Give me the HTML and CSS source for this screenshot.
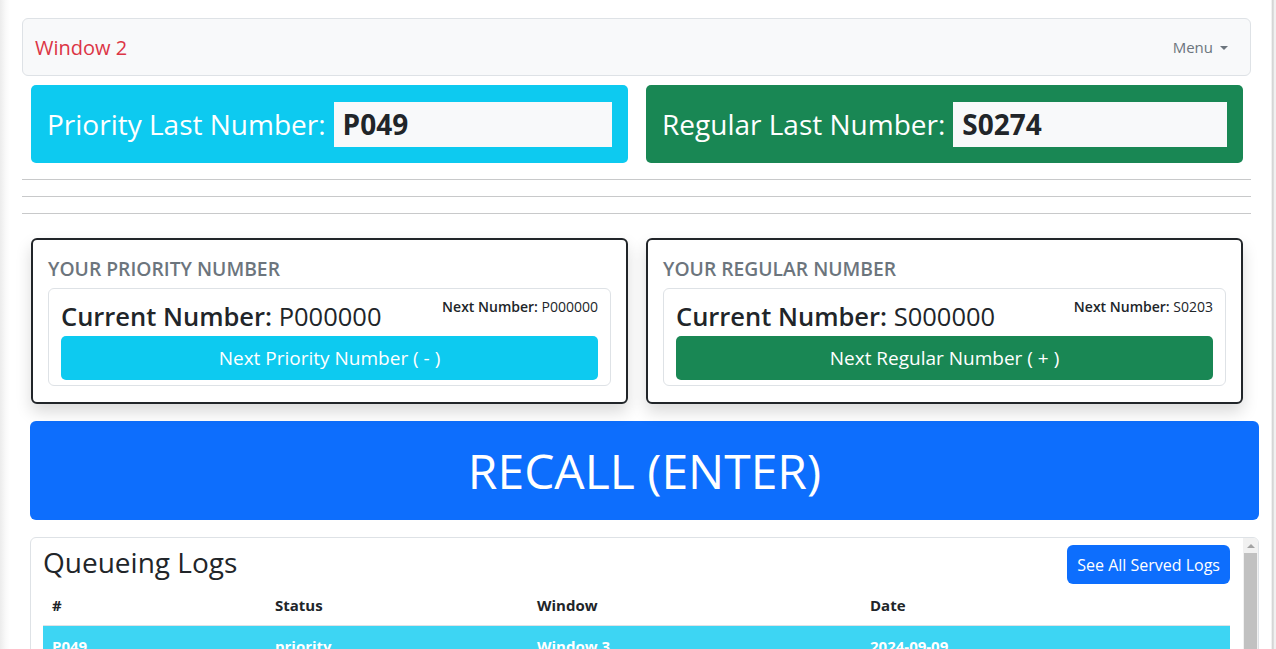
FILE: index.html
```html
<!DOCTYPE html>
<html lang="en">
<head>
<meta charset="utf-8">
<title>Window 2</title>
<link rel="stylesheet" href="styles.css">
</head>
<body>
<div class="page">
  <nav class="navbar">
    <span class="brand">Window 2</span>
    <span class="menu">Menu <span class="caret"></span></span>
  </nav>

  <div class="two-col last-row">
    <div class="last-box bg-info">
      <span class="last-label">Priority Last Number:</span>
      <div class="last-input">P049</div>
    </div>
    <div class="last-box bg-success">
      <span class="last-label">Regular Last Number:</span>
      <div class="last-input">S0274</div>
    </div>
  </div>

  <hr class="rule">
  <hr class="rule">
  <hr class="rule">

  <div class="two-col num-row">
    <div class="num-card">
      <div class="num-title">YOUR PRIORITY NUMBER</div>
      <div class="num-inner">
        <div class="num-head">
          <div class="current"><b>Current Number:</b> P000000</div>
          <div class="next"><b>Next Number:</b> P000000</div>
        </div>
        <button class="num-btn btn-info">Next Priority Number ( - )</button>
      </div>
    </div>
    <div class="num-card">
      <div class="num-title">YOUR REGULAR NUMBER</div>
      <div class="num-inner">
        <div class="num-head">
          <div class="current"><b>Current Number:</b> S000000</div>
          <div class="next"><b>Next Number:</b> S0203</div>
        </div>
        <button class="num-btn btn-success">Next Regular Number ( + )</button>
      </div>
    </div>
  </div>

  <button class="recall">RECALL (ENTER)</button>

  <div class="logs">
    <div class="logs-main">
      <div class="logs-head">
        <h3 class="logs-title">Queueing Logs</h3>
        <button class="logs-btn">See All Served Logs</button>
      </div>
      <table class="logs-table">
        <thead>
          <tr><th class="c1">#</th><th class="c2">Status</th><th class="c3">Window</th><th class="c4">Date</th></tr>
        </thead>
        <tbody>
          <tr class="row-info"><td>P049</td><td>priority</td><td>Window 3</td><td>2024-09-09</td></tr>
          <tr class="row-info"><td>S0274</td><td>regular</td><td>Window 1</td><td>2024-09-09</td></tr>
        </tbody>
      </table>
    </div>
    <div class="scrollbar">
      <div class="sb-arrow"></div>
      <div class="sb-thumb"></div>
    </div>
  </div>
</div>
</body>
</html>
```

FILE: styles.css
```css
* { box-sizing: border-box; }
html, body { margin: 0; padding: 0; height: 649px; overflow: hidden; }
body {
  font-family: "Open Sans", "Noto Sans", sans-serif;
  color: #212529;
  background: linear-gradient(90deg, #ececec 0px, #fafafa 6px, #fff 10px, #fff 1271px, #e2e2e2 1272px, #c9c9c9 1273px, #f1f1f1 1274px);
}
.page {
  width: 1251px;
  padding: 18px 0 0 22px;
}
.navbar {
  height: 58px;
  background: #f8f9fa;
  border: 1px solid #dee2e6;
  border-radius: 6px;
  display: flex;
  align-items: center;
  justify-content: space-between;
  padding: 0 22px 0 12px;
}
.brand { color: #dc3545; font-size: 20px; }
.menu { color: #6c757d; font-size: 15px; display: flex; align-items: center; gap: 7px; }
.caret {
  width: 0; height: 0;
  border-left: 4px solid transparent;
  border-right: 4px solid transparent;
  border-top: 4px solid #6c757d;
  margin-top: 1px;
}
.two-col {
  display: grid;
  grid-template-columns: 597px 597px;
  column-gap: 18px;
  padding-left: 9px;
}
.last-row { margin-top: 9px; }
.last-box {
  height: 78px;
  border-radius: 5px;
  padding: 16px;
  display: flex;
  align-items: center;
  color: #fff;
}
.bg-info { background: #0dcaf0; }
.bg-success { background: #198754; }
.last-label { font-size: 28px; white-space: nowrap; margin-right: 8px; }
.last-input {
  flex: 1;
  height: 45px;
  background: #f8f9fa;
  color: #212529;
  font-weight: 700;
  font-size: 28px;
  display: flex;
  align-items: center;
  padding-left: 9px;
}
.rule {
  border: 0;
  border-top: 1px solid #c8c9ca;
  margin: 16px 0;
  height: 0;
}
.num-row { margin-top: 24px; }
.num-card {
  height: 166px;
  border: 2px solid #212529;
  border-radius: 6px;
  box-shadow: 0 8px 16px rgba(0,0,0,.15);
  padding: 15px;
  background: #fff;
}
.num-title {
  color: #6c757d;
  font-size: 19.3px;
  font-weight: 600;
  line-height: 28px;
  margin-bottom: 5px;
}
.num-inner {
  border: 1px solid #dee2e6;
  border-radius: 6px;
  padding: 5px 12px 5px 12px;
}
.num-head {
  display: flex;
  justify-content: space-between;
  align-items: flex-start;
  height: 42px;
}
.current { font-size: 25.5px; line-height: 34px; margin-top: 5px; }
.current b { font-weight: 600; }
.next { font-size: 14px; line-height: 20px; margin-top: 3px; }
.next b { font-weight: 600; }
.num-btn {
  display: block;
  width: 100%;
  height: 44px;
  border: 0;
  border-radius: 5px;
  color: #fff;
  font-family: inherit;
  font-size: 19px;
}
.btn-info { background: #0dcaf0; }
.btn-success { background: #198754; }
.recall {
  display: block;
  width: 1229px;
  height: 99px;
  margin: 17px 0 0 8px;
  background: #0d6efd;
  color: #fff;
  border: 0;
  border-radius: 6px;
  font-family: inherit;
  font-size: 48px;
}
.logs {
  width: 1229px;
  height: 140px;
  margin: 17px 0 0 8px;
  border: 1px solid #dee2e6;
  border-radius: 6px;
  display: flex;
  overflow: hidden;
}
.logs-main { flex: 1; padding: 7px 13px 0 12px; }
.logs-head {
  display: flex;
  justify-content: space-between;
  align-items: center;
  height: 39px;
}
.logs-title { margin: -5px 0 0; font-size: 28px; font-weight: 500; }
.logs-btn {
  height: 39px;
  padding: 0 10px;
  background: #0d6efd;
  color: #fff;
  border: 0;
  border-radius: 6px;
  font-family: inherit;
  font-size: 16px;
}
.logs-table {
  width: 100%;
  border-collapse: collapse;
  margin-top: 1px;
  font-size: 15px;
}
.logs-table th, .logs-table td {
  text-align: left;
  padding: 8px 9px;
  line-height: 24px;
}
.logs-table th { font-weight: 700; border-bottom: 1px solid #dee2e6; }
.c1 { width: 223px; }
.c2 { width: 262px; }
.c3 { width: 333px; }
.row-info td { background: #3dd5f3; color: #fff; font-weight: 700; border-bottom: 1px solid #fff; }
.scrollbar {
  width: 15px;
  background: #f1f1f1;
  display: flex;
  flex-direction: column;
  align-items: center;
}
.sb-arrow {
  width: 0; height: 0;
  margin: 6px 0 5px;
  border-left: 4px solid transparent;
  border-right: 4px solid transparent;
  border-bottom: 4px solid #a3a3a3;
}
.sb-thumb { width: 13px; flex: 1; background: #c1c1c1; }
```
